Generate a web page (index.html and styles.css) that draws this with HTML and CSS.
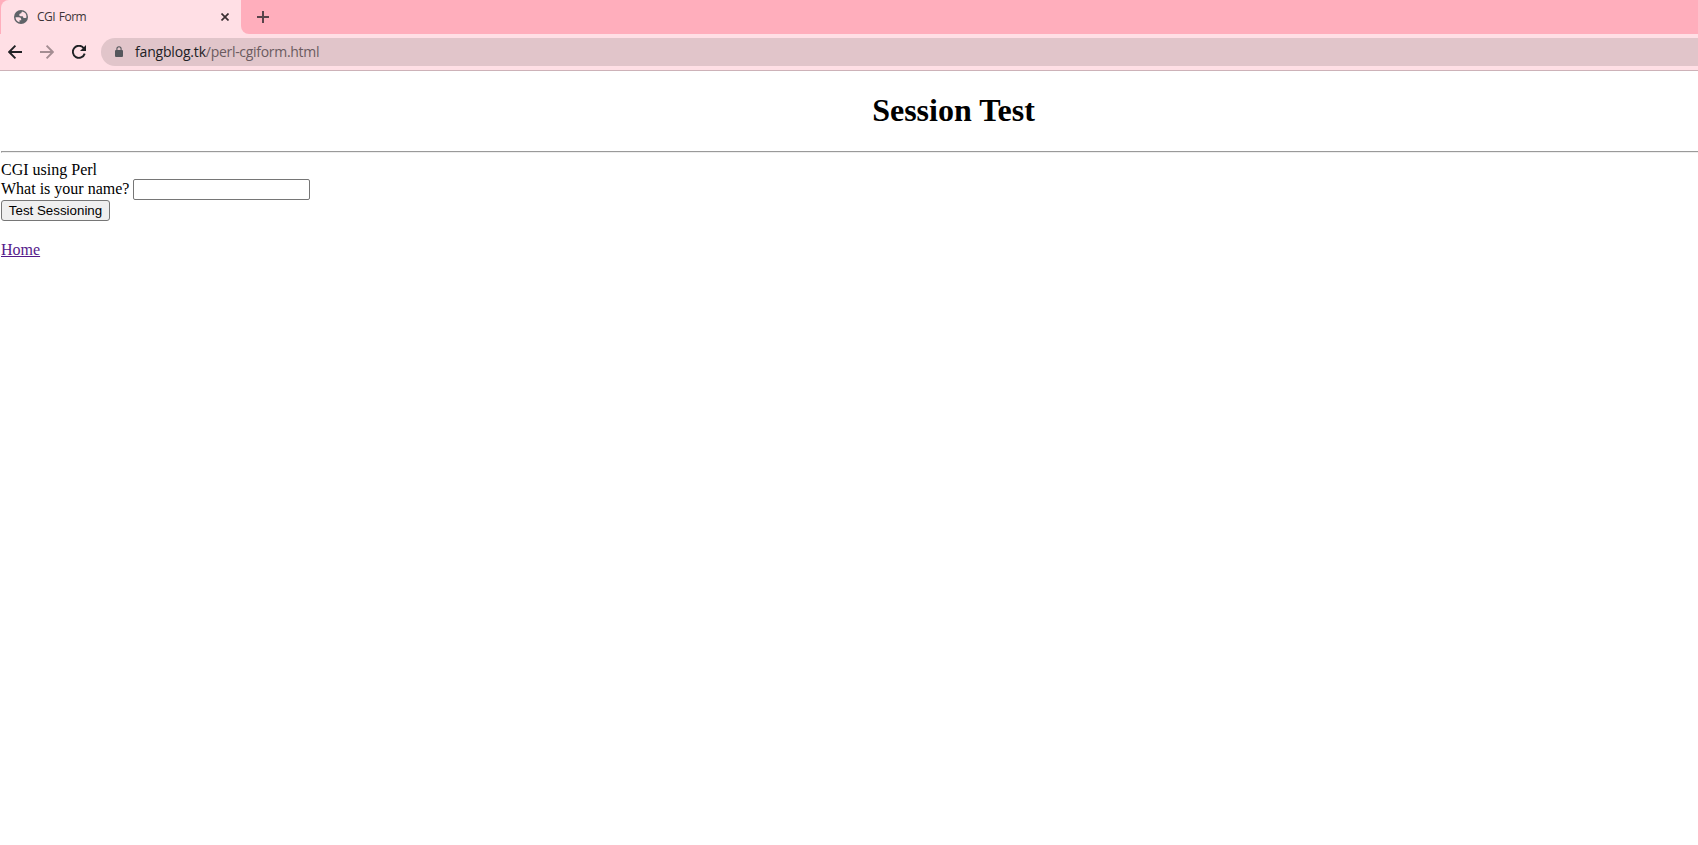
FILE: index.html
```
<!DOCTYPE html>
<html lang="en">
<head>
<meta charset="utf-8">
<title>CGI Form</title>
<link rel="stylesheet" href="styles.css">
</head>
<body>
<div class="tabstrip">
  <div class="tab">
    <svg class="globe" width="14" height="14" viewBox="0 0 14 14"><circle cx="7" cy="7" r="7" fill="#5f6368"/><path d="M8 1.6 L7.2 3.2 Q5.2 3.3 5.2 5 Q5.3 6.2 7 6.2 H8.6 Q9.4 6.6 9.4 8 H11.4 Q12.4 8 12.5 7.2 A5.6 5.6 0 0 0 8 1.6Z M1.5 7.2 H5 Q7.2 7.2 7.2 9.2 V10.2 H5.5 V12.3 A5.6 5.6 0 0 1 1.5 7.2Z" fill="#ffdfe5"/></svg>
    <span class="tab-title">CGI Form</span>
    <svg class="close" width="8" height="8" viewBox="0 0 8 8"><path d="M.5 .5 7.5 7.5M7.5 .5 .5 7.5" stroke="#3b2f32" stroke-width="1.7"/></svg>
  </div>
  <div class="strip-rest">
    <svg width="12" height="12" viewBox="0 0 12 12"><path d="M6 0V12M0 6H12" stroke="#58434a" stroke-width="2"/></svg>
  </div>
</div>
<div class="toolbar">
  <svg class="nav" width="14" height="14" viewBox="0 0 14 14"><path d="M14 7H1.5M7.4 .7 1.2 7 7.4 13.3" fill="none" stroke="#202124" stroke-width="1.9"/></svg>
  <svg class="nav" width="14" height="14" viewBox="0 0 14 14"><path d="M0 7H12.5M6.6 .7 12.8 7 6.6 13.3" fill="none" stroke="#a48d92" stroke-width="1.9"/></svg>
  <svg class="nav" width="14" height="14" viewBox="0 0 14 14"><path d="M11.8 3.2A6.05 6.05 0 1 0 12.7 8.6" fill="none" stroke="#202124" stroke-width="1.9"/><path d="M14 0V6H8Z" fill="#202124"/></svg>
  <div class="omnibox">
    <svg class="lock" width="8" height="11" viewBox="0 0 8 11"><rect y="4" width="8" height="7" rx="1" fill="#54575c"/><path d="M1.9 4.5V2.8a2.1 2.1 0 0 1 4.2 0V4.5" fill="none" stroke="#54575c" stroke-width="1.1"/></svg>
    <span class="url"><span class="host">fangblog.tk</span>/perl-cgiform.html</span>
  </div>
</div>
<main class="page">
  <h1>Session Test</h1>
  <hr>
  <form>
    CGI using Perl<br>
    <div class="row"><label for="name">What is your name?</label><input id="name" type="text"></div>
    <button type="button">Test Sessioning</button>
  </form>
  <a class="home" href="#">Home</a>
</main>
</body>
</html>
```
FILE: styles.css
```
body { margin: 0; height: 845px; overflow: hidden; background: #fff; }
svg { display: block; flex: none; }
.tabstrip { display: flex; height: 34px; background: linear-gradient(90deg, #ffaebc 20px, #ffdfe5 20px); }
.tab { display: flex; align-items: center; box-sizing: border-box; width: 240px; margin-left: 1px; padding: 0 12px 0 13px; background: #ffdfe5; border-radius: 8px 8px 0 0; }
.tab-title { flex: 1; margin-left: 9px; font: 12px/16px "Open Sans", sans-serif; letter-spacing: -0.5px; word-spacing: 1px; color: #3c3437; }
.strip-rest { flex: 1; display: flex; align-items: center; padding-left: 16px; background: #ffaebc; border-bottom-left-radius: 8px; }
.toolbar { display: flex; align-items: center; box-sizing: border-box; height: 37px; padding-left: 8px; background: #ffdfe5; border-bottom: 1px solid #cdb2b8; }
.nav { margin-right: 18px; }
.omnibox { flex: 1; display: flex; align-items: center; height: 28px; margin-left: -3px; padding-left: 14px; border-radius: 14px 0 0 14px; background: #e1c5ca; }
.lock { margin-top: -1px; }
.url { margin-left: 12px; font: 14px/20px "Open Sans", sans-serif; letter-spacing: -0.3px; color: #6b5b60; }
.host { color: #202124; letter-spacing: -0.18px; }
.page { margin-left: 1px; font: 16px/18px "Liberation Serif", serif; color: #000; display: flow-root; }
h1 { margin: 21.44px 0; padding-left: 208px; font-size: 32px; line-height: 37px; text-align: center; }
hr { margin: 0 0 8px; border-right: 0; }
.row { display: flex; height: 21px; line-height: 19px; }
input { box-sizing: border-box; width: 177px; height: 21px; margin: 0 0 0 4px; padding: 1px 2px; border: 1px solid #767676; border-radius: 2px; }
button { display: block; box-sizing: border-box; width: 109px; height: 21px; margin: 0; padding: 0; font: 13.333px/17px "Liberation Sans", sans-serif; color: #000; background: #efefef; border: 1px solid #767676; border-radius: 3px; }
.home { display: inline-block; margin-top: 20px; color: #551a8b; text-decoration: underline; }
```
